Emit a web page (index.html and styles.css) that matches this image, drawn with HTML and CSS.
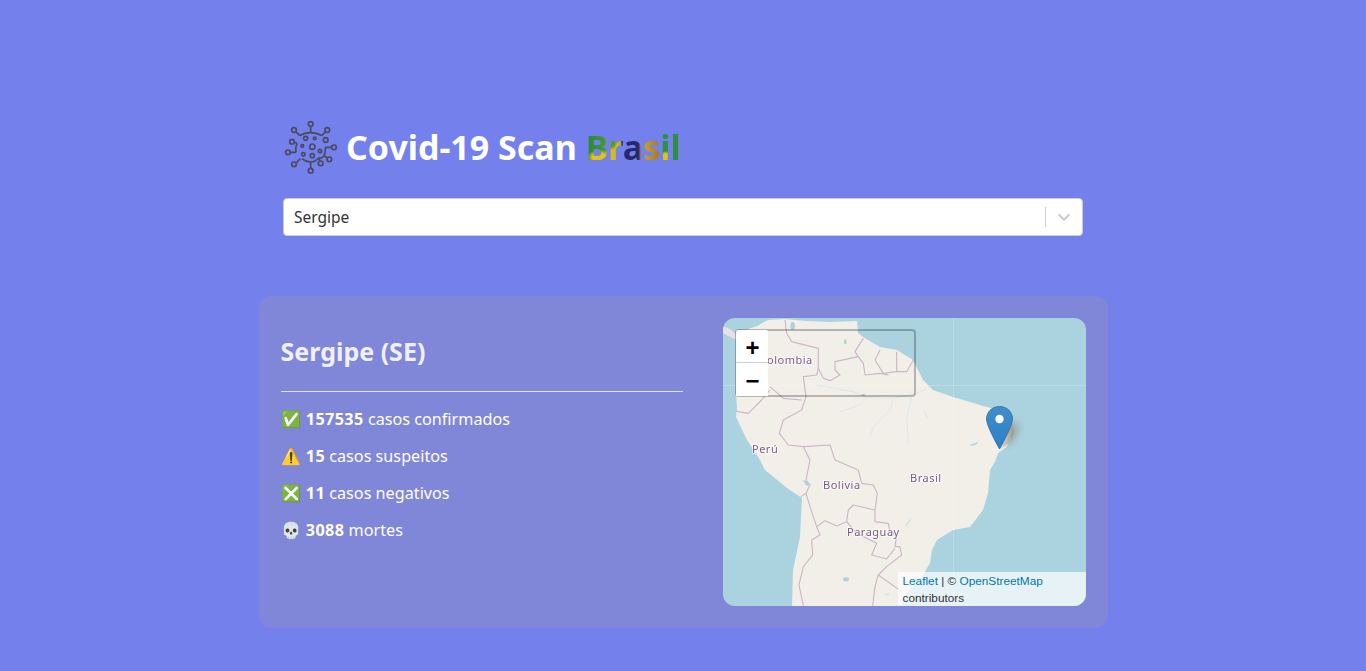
FILE: index.html
```html
<!DOCTYPE html>
<html lang="en">
<head>
    <meta charset="UTF-8">
    <meta name="viewport" content="width=device-width, initial-scale=1.0">
    <title>Covid-19 Scan Brasil</title>
    <link rel="stylesheet" href="styles.css">
</head>
<body>
    <header class="top">
        <div class="brand">
            <svg class="virus" viewBox="0 0 168 168" fill="none" stroke="#4a4a5e" stroke-width="5">
                <circle cx="80" cy="12" r="7"/><circle cx="30" cy="30" r="7"/><circle cx="130" cy="30" r="7"/>
                <circle cx="24" cy="65" r="7"/><circle cx="125" cy="60" r="7"/><circle cx="12" cy="97" r="7"/>
                <circle cx="150" cy="82" r="7"/><circle cx="136" cy="118" r="7"/><circle cx="30" cy="133" r="7"/>
                <circle cx="110" cy="130" r="7"/><circle cx="80" cy="152" r="7"/>
                <circle cx="85" cy="80" r="8"/><circle cx="65" cy="55" r="6"/><circle cx="92" cy="55" r="4"/>
                <circle cx="55" cy="78" r="4"/><circle cx="108" cy="93" r="5"/><circle cx="58" cy="103" r="5"/>
                <circle cx="85" cy="107" r="6"/>
                <path d="M80 19V38M35 35l13 12M125 36l-13 11M31 67l8 3M19 97h17M143 82h-19M38 128l11-12M130 114l-10-7M80 145v-19M108 123l-4-10"/>
                <path d="M48 47q14-9 32-9t32 9M120 107q-5 10-16 6M104 113q-10 13-24 13t-26-10M36 97q-3-14 3-27M124 82q1 13-4 25"/>
            </svg>
            <h1 class="title">Covid-19 Scan <span class="title-flag">Brasil</span></h1>
        </div>
        <div class="select">
            <span class="select-value">Sergipe</span>
            <span class="select-sep"></span>
            <svg class="select-arrow" viewBox="0 0 20 20"><path fill="#ccc" d="M4.5 7.3a1 1 0 0 1 1.5 0L10 11.3l4-4a1 1 0 0 1 1.5 1.4l-4.8 4.7a1 1 0 0 1-1.4 0L4.5 8.7a1 1 0 0 1 0-1.4z"/></svg>
        </div>
    </header>

    <main class="card">
        <section class="info">
            <h2 class="state">Sergipe (SE)</h2>
            <hr class="rule">
            <p class="stat"><span class="emoji">✅</span> <b>157535</b> casos confirmados</p>
            <p class="stat"><span class="emoji">⚠️</span> <b>15</b> casos suspeitos</p>
            <p class="stat"><span class="emoji">❎</span> <b>11</b> casos negativos</p>
            <p class="stat"><span class="emoji">💀</span> <b>3088</b> mortes</p>
        </section>

        <section class="map">
            <svg class="map-tiles" viewBox="723 318 363 288">
                <defs>
                    <linearGradient id="pin" x1="0" y1="0" x2="0" y2="1">
                        <stop offset="0" stop-color="#3f8fc8"/>
                        <stop offset="1" stop-color="#2a7fcc"/>
                    </linearGradient>
                    <linearGradient id="pinshadow" x1="0" y1="0" x2="1" y2="0">
                        <stop offset="0" stop-color="#e4e2dc"/>
                        <stop offset="1" stop-color="#9a9891"/>
                    </linearGradient>
                    <filter id="soft"><feGaussianBlur stdDeviation="3.5"/></filter>
                    <filter id="tile" x="0" y="0" width="1" height="1"><feGaussianBlur stdDeviation="0.45"/></filter>
                </defs>
                <g filter="url(#tile)">
                <rect x="723" y="318" width="363" height="288" fill="#abd3df"/>
                <!-- land -->
                <path fill="#f2efe9" d="M768 320 L785 319 L805 321 L830 322 L857 321 L858 333 L863 337 L880 347 L897 350 L913 360 L923 380 L933 390 L953 397 L987 407 L1000 410 L1012 423 L1013 430 L1007 447 L998 453 L995 462 L990 470 L988 493 L983 510 L970 527 L953 530 L937 540 L932 550 L930 563 L923 575 L905 595 L902 606 L792 606 L793 570 L800 537 L802 498 L787 488 L765 470 L760 460 L747 440 L736 417 L737 408 L736 392 L736 340 L740 332 L757 326Z"/>
                <path fill="#e9dfe4" d="M723 326 L730 329 L737 335 L737 340 L728 336 L723 333Z"/>
                <!-- tile seams -->
                <path stroke="#fff" stroke-opacity=".18" fill="none" d="M953.5 318V606M723 385.5H1086"/>
                <!-- rivers, traced in the zoomed crop -->
                <g transform="translate(720 310) scale(.3333)" fill="none" stroke="#d6e6ea" stroke-width="2.5">
                    <path d="M290 225 L345 235 L400 245 L440 262 L520 265 L590 250 L620 235"/>
                    <path d="M520 265 L510 300 L460 350 L450 380"/>
                    <path d="M575 265 L560 320 L565 400"/>
                    <path d="M360 305 L420 285 L440 262"/>
                    <path d="M610 300 L625 325"/>
                </g>
                <g transform="translate(720 310) scale(.3333)" fill="#abd3df">
                    <ellipse cx="218" cy="48" rx="7" ry="12"/>
                    <ellipse cx="376" cy="95" rx="4" ry="8"/>
                    <path d="M750 405 L775 395 L770 402 L755 408Z"/>
                    <ellipse cx="430" cy="255" rx="6" ry="3"/>
                </g>
                <!-- borders -->
                <g transform="translate(720 310) scale(.3333)" fill="none" stroke="#cdb6c6" stroke-width="3.4" stroke-linejoin="round">
                    <path d="M195 30 L200 70 L215 95 L295 115 L295 175 L310 205 L330 212 L360 195 L345 180 L345 155 L415 140 L405 125 L430 85"/>
                    <path d="M415 140 L430 160 L435 195 L480 190 L505 195"/>
                    <path d="M480 120 L465 150 L490 190 L530 185 L530 125"/>
                    <path d="M530 185 L560 185 L580 150"/>
                    <path d="M295 175 L290 195 L250 200 L258 260 L245 300 L190 330 L178 370 L205 405 L250 410 L330 405 L345 450"/>
                    <path d="M150 230 L190 265 L245 270"/>
                    <path d="M150 240 L125 270 L85 310 L55 305 L45 300"/>
                    <path d="M250 410 L270 450"/>
                </g>
                <g transform="translate(720 460) scale(.3333)" fill="none" stroke="#cdb6c6" stroke-width="3.4" stroke-linejoin="round">
                    <path d="M270 0 L258 60 L270 75 L258 100 L243 110"/>
                    <path d="M345 0 L415 30 L425 70 L460 75 L472 100 L465 150 L465 185 L505 190 L510 215 L530 225 L525 260 L540 260 L545 285 L500 320 L475 345 L545 395"/>
                    <path d="M258 100 L270 140 L290 200 L315 182 L350 198 L380 185 L385 150 L400 135 L465 150"/>
                    <path d="M380 185 L410 220 L470 250 L455 285 L500 297 L525 265"/>
                    <path d="M290 200 L300 225 L275 240 L278 285 L250 320 L237 375 L250 437"/>
                    <path d="M475 345 L465 380 L458 437"/>
                </g>
                <g transform="translate(720 460) scale(.3333)" fill="#abd3df">
                    <path d="M248 60 L262 65 L270 78 L258 76Z"/>
                    <ellipse cx="378" cy="358" rx="9" ry="6"/>
                    <path d="M555 195 L575 172 L570 185 L560 197Z" fill="#cfe3ea"/>
                    <ellipse cx="500" cy="403" rx="8" ry="3" fill="#cfe3ea"/>
                </g>
                <!-- place names -->
                <g class="map-labels">
                    <text x="767" y="364">olombia</text>
                    <text x="752" y="453">Perú</text>
                    <text x="823" y="489">Bolivia</text>
                    <text x="910" y="482">Brasil</text>
                    <text x="847" y="536">Paraguay</text>
                </g>
                </g>
                <!-- marker -->
                <path fill="#8a8780" fill-opacity=".45" filter="url(#soft)" d="M1006 418 L1022 426 L1012 444 L1002 448Z"/>
                <path fill="url(#pinshadow)" d="M1005 416 Q1015 424 1014 434 Q1011 444 999 449Z"/>
                <path fill="url(#pin)" stroke="#2e6c97" stroke-width=".8" d="M999.5 406.5 C991.5 406.5 986.5 412.5 986.5 419 C986.5 425 995 441 999.5 449 C1004 441 1012.5 425 1012.5 419 C1012.5 412.5 1007.5 406.5 999.5 406.5Z"/>
                <circle cx="999.5" cy="419" r="4.2" fill="#fff"/>
            </svg>
            <div class="zoom">
                <a class="zoom-btn zoom-in">+</a>
                <a class="zoom-btn">−</a>
            </div>
            <div class="attribution">
                <a>Leaflet</a> | © <a>OpenStreetMap</a> contributors
            </div>
        </section>
    </main>
</body>
</html>
```

FILE: styles.css
```css
* {
    margin: 0;
    padding: 0;
    box-sizing: border-box;
}

body {
    background-color: #7481ec;
    color: #fff;
    font-family: "Noto Sans", sans-serif;
    height: 671px;
    overflow: hidden;
}

.top {
    width: 800px;
    margin: 0 auto;
    padding-top: 120px;
}

.brand {
    display: flex;
    align-items: center;
    height: 56px;
}

.virus {
    width: 56px;
    height: 56px;
    flex-shrink: 0;
    margin-left: 1px;
}

.title {
    margin-left: 6px;
    margin-bottom: 2px;
    font-size: 34px;
    font-weight: 700;
    white-space: nowrap;
}

.title-flag {
    color: transparent;
    background:
        radial-gradient(ellipse 13% 16% at 14% 72%, #e2c21f 55%, transparent 100%),
        radial-gradient(ellipse 6% 14% at 84% 72%, #dcbf22 55%, transparent 100%),
        radial-gradient(ellipse 6% 18% at 27% 38%, #4f9c30 60%, transparent 100%),
        linear-gradient(90deg, #2d8536 0, #3f9a33 20%, #dcbc1e 24%, #c9b422 36%, #2a2a74 38%, #24256a 55%, #d0a81c 59%, #a87a1e 77%, #2f8f3b 80%, #2f8f3b 100%);
    -webkit-background-clip: text;
    background-clip: text;
}

.select {
    display: flex;
    align-items: center;
    height: 38px;
    margin-top: 22px;
    background-color: #fff;
    border: 1px solid #ccc;
    border-radius: 4px;
    color: #333;
    font-size: 15.5px;
    padding-left: 10px;
}

.select-value {
    flex: 1;
}

.select-sep {
    width: 1px;
    height: 20px;
    background-color: #ccc;
}

.select-arrow {
    width: 20px;
    height: 20px;
    margin: 0 8px;
}

.card {
    display: flex;
    gap: 40px;
    width: 849px;
    height: 332px;
    margin: 60px auto 0;
    padding: 22px;
    background-color: #8086d8;
    border-radius: 12px;
}

.info {
    width: 402px;
    flex-shrink: 0;
}

.state {
    margin-top: 17px;
    font-size: 25px;
    line-height: 33px;
    color: #f0f0fa;
}

.rule {
    margin-top: 23px;
    margin-bottom: 15px;
    border: 0;
    height: 1px;
    background-color: #e6e6e6;
}

.stat {
    font-size: 16.2px;
    line-height: 24px;
    margin-bottom: 13px;
}

.stat b {
    letter-spacing: .4px;
}

.emoji {
    margin-right: 1px;
}

.map {
    position: relative;
    width: 363px;
    height: 288px;
    border-radius: 12px;
    overflow: hidden;
}

.map-tiles {
    display: block;
    width: 363px;
    height: 288px;
}

.map-labels text {
    font-family: "Noto Sans", sans-serif;
    font-size: 11px;
    letter-spacing: .5px;
    fill: #7d5a85;
    stroke: #fff;
    stroke-opacity: .6;
    stroke-width: 2px;
    paint-order: stroke;
}

.zoom {
    position: absolute;
    left: 12px;
    top: 11px;
    width: 181px;
    height: 68px;
    border: 2px solid rgba(0, 0, 0, .25);
    border-radius: 4px;
}

.zoom-btn {
    display: block;
    width: 32px;
    height: 33px;
    margin-left: -1px;
    padding-left: 2px;
    background-color: #fff;
    color: #000;
    font: 700 24px/35px "Liberation Sans", sans-serif;
    text-align: center;
}

.zoom-in {
    margin-top: -1px;
    border-bottom: 1px solid #ccc;
    border-radius: 2px 2px 0 0;
}

.attribution {
    position: absolute;
    right: 0;
    bottom: -1px;
    width: 188px;
    padding: 1px 5px 0;
    background-color: rgba(255, 255, 255, .7);
    color: #333;
    font: 11.8px/17px "Liberation Sans", sans-serif;
}

.attribution a {
    color: #0078a8;
}
```
